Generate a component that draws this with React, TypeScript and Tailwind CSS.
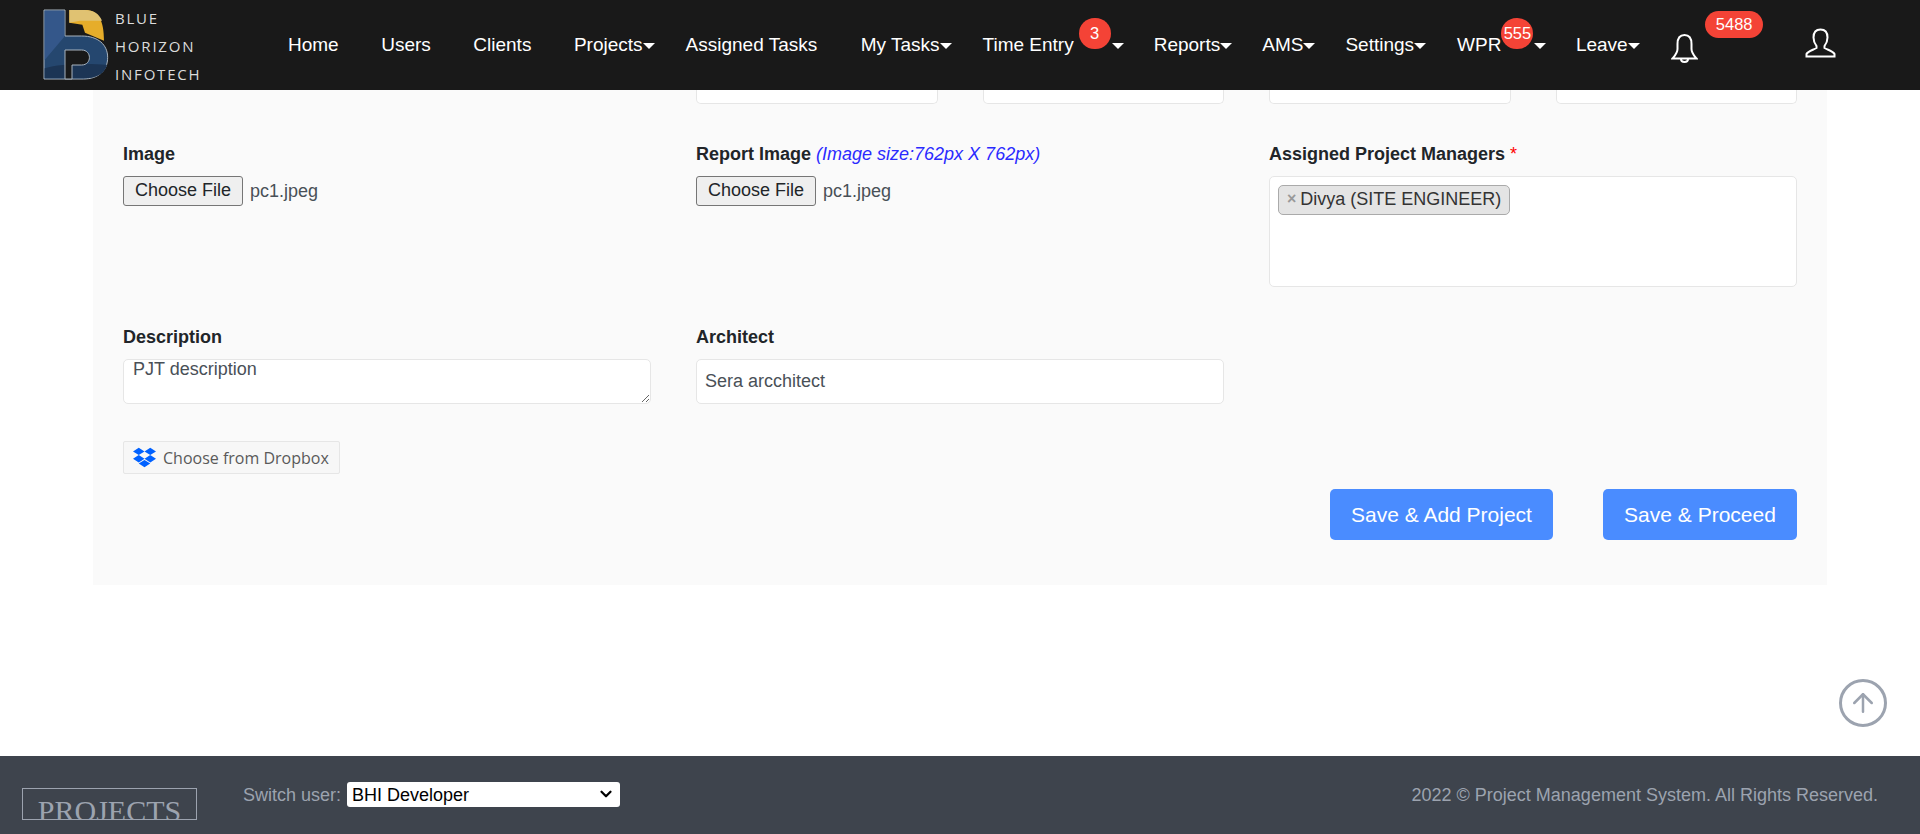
import { ArrowUp, ChevronDown } from "lucide-react";
import { FaDropbox } from "react-icons/fa";

function Caret() {
  return <span className="block w-0 h-0 border-x-[6px] border-t-[6px] border-x-transparent border-t-white mt-[2px]" />;
}

function NavItem({ label, caret, className }: { label: string; caret?: boolean; className: string }) {
  return (
    <a className={`flex items-center text-white ${className}`}>
      <span className="whitespace-nowrap">{label}</span>
      {caret && <Caret />}
    </a>
  );
}

function Badge({ text, className }: { text: string; className: string }) {
  return (
    <span className={`flex items-center justify-center bg-[#f44336] text-white text-[16.5px] ${className}`}>{text}</span>
  );
}

function Logo() {
  return (
    <div className="flex w-[190px] h-[90px] ml-[30px] shrink-0">
      <svg width="80" height="90" viewBox="0 0 240 270" className="shrink-0">
        <path
          d="M42 30H105V108H155C205 108 233 135 233 172C233 212 205 237 160 237H42Z"
          fill="#25476f"
          stroke="#a9b4bf"
          strokeWidth="3"
        />
        <path d="M44 32H103V110L44 180Z" fill="#34578a" />
        <path d="M44 235V205C90 190 180 190 231 195C225 220 200 235 160 235Z" fill="#1c3555" />
        <path
          d="M105 150H155C186 150 186 195 155 195H126V237H105Z"
          fill="#191919"
          stroke="#a9b4bf"
          strokeWidth="3"
        />
        <path d="M118 30H165C205 30 222 60 222 122L165 98L157 74L118 68Z" fill="#e6ad2a" />
        <path d="M118 30H165C190 30 208 42 216 62H150L118 68Z" fill="#e0c272" />
      </svg>
      <div className="flex flex-col justify-between pt-[8px] pb-[6px] ml-[5px] font-['Open_Sans',sans-serif] text-[15px] leading-[20px] tracking-[1.8px] text-[#dcdcdc]">
        <span>BLUE</span>
        <span>HORIZON</span>
        <span>INFOTECH</span>
      </div>
    </div>
  );
}

function Header() {
  return (
    <header className="flex items-center h-[90px] shrink-0 bg-[#191919] text-[19px]">
      <Logo />
      <nav className="flex items-center ml-[68px]">
        <NavItem label="Home" className="mr-[42.5px]" />
        <NavItem label="Users" className="mr-[42.5px]" />
        <NavItem label="Clients" className="mr-[42.5px]" />
        <NavItem label="Projects" caret className="mr-[31px]" />
        <NavItem label="Assigned Tasks" className="mr-[43.5px]" />
        <NavItem label="My Tasks" caret className="mr-[31px]" />
        <a className="flex items-center text-white mr-[30px]">
          <span className="whitespace-nowrap">Time Entry</span>
          <Badge text="3" className="ml-[5px] mr-[1px] w-[32px] h-[31px] rounded-full -translate-y-[12px]" />
          <Caret />
        </a>
        <NavItem label="Reports" caret className="mr-[30px]" />
        <NavItem label="AMS" caret className="mr-[30px]" />
        <NavItem label="Settings" caret className="mr-[31px]" />
        <a className="flex items-center text-white mr-[29.5px]">
          <span className="whitespace-nowrap">WPR</span>
          <Badge text="555" className="mr-[1px] w-[32px] h-[31px] rounded-full -translate-y-[12px]" />
          <Caret />
        </a>
        <NavItem label="Leave" caret className="mr-[29px]" />
        <svg width="27" height="30" viewBox="0 0 27 30" fill="none" stroke="white" strokeWidth="2" className="ml-[2.5px] mt-[6px] shrink-0">
          <path d="M13.5 2C8.5 2 6.5 6 6.5 11V16C6.5 20 4 22.5 1.5 25.5H25.5C23 22.5 20.5 20 20.5 16V11C20.5 6 18.5 2 13.5 2Z" />
          <path d="M10 26C10 30 17 30 17 26" />
        </svg>
        <Badge text="5488" className="ml-[7px] w-[58px] h-[27px] rounded-[14px] -translate-y-[21px]" />
        <svg width="31" height="30" viewBox="0 0 31 30" fill="none" stroke="white" strokeWidth="2" className="ml-[42px] -mt-[4px] shrink-0">
          <path d="M15.5 1.5C10.5 1.5 8.5 5 8.5 9.5C8.5 13 10 16 11.5 18V20C8 22 3 23 1.5 26V28.5H29.5V26C28 23 23 22 19.5 20V18C21 16 22.5 13 22.5 9.5C22.5 5 20.5 1.5 15.5 1.5Z" />
        </svg>
      </nav>
    </header>
  );
}

function Label({ children }: { children: React.ReactNode }) {
  return <label className="block h-[27px] leading-[27px] mb-[8px] font-bold text-[#212529] whitespace-nowrap">{children}</label>;
}

function FileField({ label }: { label: React.ReactNode }) {
  return (
    <div>
      <Label>{label}</Label>
      <div className="flex items-center h-[30px]">
        <button className="w-[120px] h-[30px] pb-[2px] bg-[#efefef] border border-[#767676] rounded-[3px] text-[#212529]">Choose File</button>
        <span className="ml-[7px] text-[#495057]">pc1.jpeg</span>
      </div>
    </div>
  );
}

function Form() {
  return (
    <section className="mx-[93px] px-[30px] pb-[45px] bg-[#fafafa] text-[18px] text-[#495057]">
      {/* inputs of the row above, mostly hidden behind the header */}
      <div className="grid grid-cols-3 gap-x-[45px]">
        <div className="col-start-2 col-span-2 grid grid-cols-4 gap-x-[45px]">
          <div className="h-[14px] bg-white border border-t-0 border-[#e6e6e6] rounded-b-[5px]" />
          <div className="h-[14px] bg-white border border-t-0 border-[#e6e6e6] rounded-b-[5px]" />
          <div className="h-[14px] bg-white border border-t-0 border-[#e6e6e6] rounded-b-[5px]" />
          <div className="h-[14px] bg-white border border-t-0 border-[#e6e6e6] rounded-b-[5px]" />
        </div>
      </div>

      <div className="grid grid-cols-3 gap-x-[45px] mt-[37px]">
        <FileField label="Image" />
        <FileField
          label={
            <>
              Report Image <i className="font-normal text-[#2a2aff]">(Image size:762px X 762px)</i>
            </>
          }
        />
        <div>
          <Label>
            Assigned Project Managers <span className="text-[#ff0000] font-normal">*</span>
          </Label>
          <div className="h-[111px] bg-white border border-[#e6e6e6] rounded-[5px] pt-[8px] pl-[8px]">
            <span className="inline-flex items-center h-[30px] pb-[2px] pl-[8px] pr-[8px] bg-[#e4e4e4] border border-[#aaaaaa] rounded-[5px] text-[#333333]">
              <span className="mr-[4px] text-[#999999] font-bold text-[16px]">×</span>Divya (SITE ENGINEER)
            </span>
          </div>
        </div>
      </div>

      <div className="grid grid-cols-3 gap-x-[45px] mt-[37px]">
        <div>
          <Label>Description</Label>
          <textarea
            readOnly
            defaultValue="PJT description"
            className="block w-full h-[45px] px-[9px] bg-white border border-[#e6e6e6] rounded-[5px] leading-[19px] text-[#495057]"
          />
        </div>
        <div>
          <Label>Architect</Label>
          <input
            readOnly
            defaultValue="Sera arcchitect"
            className="block w-full h-[45px] px-[8px] bg-white border border-[#e6e6e6] rounded-[5px] text-[#495057]"
          />
        </div>
      </div>

      <button className="flex items-center mt-[37px] w-[217px] h-[33px] pl-[9px] bg-[#f7f7f7] border border-[#e6e6e6] rounded-[2px] font-['Open_Sans',sans-serif] text-[16px] text-[#5a5a5a]">
        <FaDropbox className="text-[#0061ff] text-[23px] mr-[7px]" />
        Choose from Dropbox
      </button>

      <div className="flex justify-end gap-[50px] mt-[15px]">
        <button className="w-[223px] h-[51px] bg-[#4a8cff] rounded-[5px] text-white text-[21px]">Save &amp; Add Project</button>
        <button className="w-[194px] h-[51px] bg-[#4a8cff] rounded-[5px] text-white text-[21px]">Save &amp; Proceed</button>
      </div>
    </section>
  );
}

function Footer() {
  return (
    <footer className="flex h-[78px] shrink-0 pt-[26px] bg-[#3e444d] text-[18px] text-[#9ca3af]">
      <div className="w-[175px] h-[32px] ml-[22px] mt-[6px] border border-[#9ca3af] overflow-hidden text-center font-['Liberation_Serif',serif] text-[30px] leading-[34px] pt-[5px]">
        PROJECTS
      </div>
      <span className="ml-[46px] h-[25px] leading-[27px]">Switch user:</span>
      <div className="relative ml-[6px] w-[273px] h-[25px]">
        <select
          defaultValue="BHI Developer"
          className="block w-full h-full pl-[5px] appearance-none bg-white rounded-[3px] text-black"
        >
          <option>BHI Developer</option>
        </select>
        <ChevronDown size={18} strokeWidth={3} className="absolute right-[5px] top-[3px] text-black pointer-events-none" />
      </div>
      <span className="ml-auto mr-[42px] h-[25px] leading-[27px]">2022 © Project Management System. All Rights Reserved.</span>
    </footer>
  );
}

export default function App() {
  return (
    <div className="relative flex flex-col h-screen overflow-hidden bg-white font-['Liberation_Sans',Arial,sans-serif]">
      <Header />
      <main className="flex-1">
        <Form />
      </main>
      <button className="absolute right-[33px] bottom-[107px] flex items-center justify-center w-[48px] h-[48px] rounded-full border-[3px] border-[#9ca3af] text-[#9ca3af]">
        <ArrowUp size={30} strokeWidth={2} />
      </button>
      <Footer />
    </div>
  );
}
